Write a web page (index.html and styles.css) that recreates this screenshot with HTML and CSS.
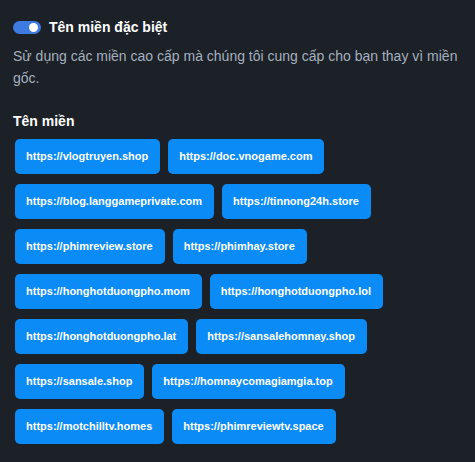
FILE: index.html
```html
<!DOCTYPE html>
<html lang="vi">
<head>
    <meta charset="UTF-8">
    <meta name="viewport" content="width=device-width, initial-scale=1.0">
    <title>Tên miền đặc biệt</title>
    <link rel="stylesheet" href="styles.css">
</head>
<body>
    <div class="panel">
        <div class="switch-row">
            <span class="switch"><span class="knob"></span></span>
            <span class="switch-label">Tên miền đặc biệt</span>
        </div>
        <p class="desc">Sử dụng các miền cao cấp mà chúng tôi cung cấp cho bạn thay vì miền gốc.</p>

        <h3 class="section-title">Tên miền</h3>
        <div class="domains">
            <a class="domain">https://vlogtruyen.shop</a>
            <a class="domain">https://doc.vnogame.com</a>
            <a class="domain">https://blog.langgameprivate.com</a>
            <a class="domain">https://tinnong24h.store</a>
            <a class="domain">https://phimreview.store</a>
            <a class="domain">https://phimhay.store</a>
            <a class="domain">https://honghotduongpho.mom</a>
            <a class="domain">https://honghotduongpho.lol</a>
            <a class="domain">https://honghotduongpho.lat</a>
            <a class="domain">https://sansalehomnay.shop</a>
            <a class="domain">https://sansale.shop</a>
            <a class="domain">https://homnaycomagiamgia.top</a>
            <a class="domain">https://motchilltv.homes</a>
            <a class="domain">https://phimreviewtv.space</a>
        </div>
    </div>
</body>
</html>
```

FILE: styles.css
```css
html, body {
    margin: 0;
    padding: 0;
    background-color: #1c2027;
    font-family: "Liberation Sans", Arial, sans-serif;
}

.panel {
    padding: 17px 13px 0 13px;
    width: 449px;
}

.switch-row {
    display: flex;
    align-items: center;
    height: 20px;
}

.switch {
    width: 28px;
    height: 13px;
    border-radius: 7px;
    background-color: #3d7be0;
    display: flex;
    align-items: center;
    justify-content: flex-end;
    padding-right: 3px;
    box-sizing: border-box;
}

.knob {
    width: 9px;
    height: 9px;
    border-radius: 50%;
    background-color: #fff;
}

.switch-label {
    margin-left: 8px;
    color: #fff;
    font-weight: bold;
    font-size: 14px;
}

.desc {
    margin: 8px 0 0 0;
    color: #a4b0bf;
    font-size: 14px;
    line-height: 22px;
}

.section-title {
    margin: 23px 0 0 0;
    color: #fff;
    font-size: 14px;
    font-weight: bold;
    line-height: 18px;
}

.domains {
    display: flex;
    flex-wrap: wrap;
    gap: 10px 8px;
    margin: 9px 0 0 2px;
}

.domain {
    background-color: #0b8bf6;
    color: #fff;
    font-weight: bold;
    font-size: 11px;
    height: 35px;
    line-height: 35px;
    padding: 0 12px 0 11px;
    border-radius: 5px;
    white-space: nowrap;
}
```
